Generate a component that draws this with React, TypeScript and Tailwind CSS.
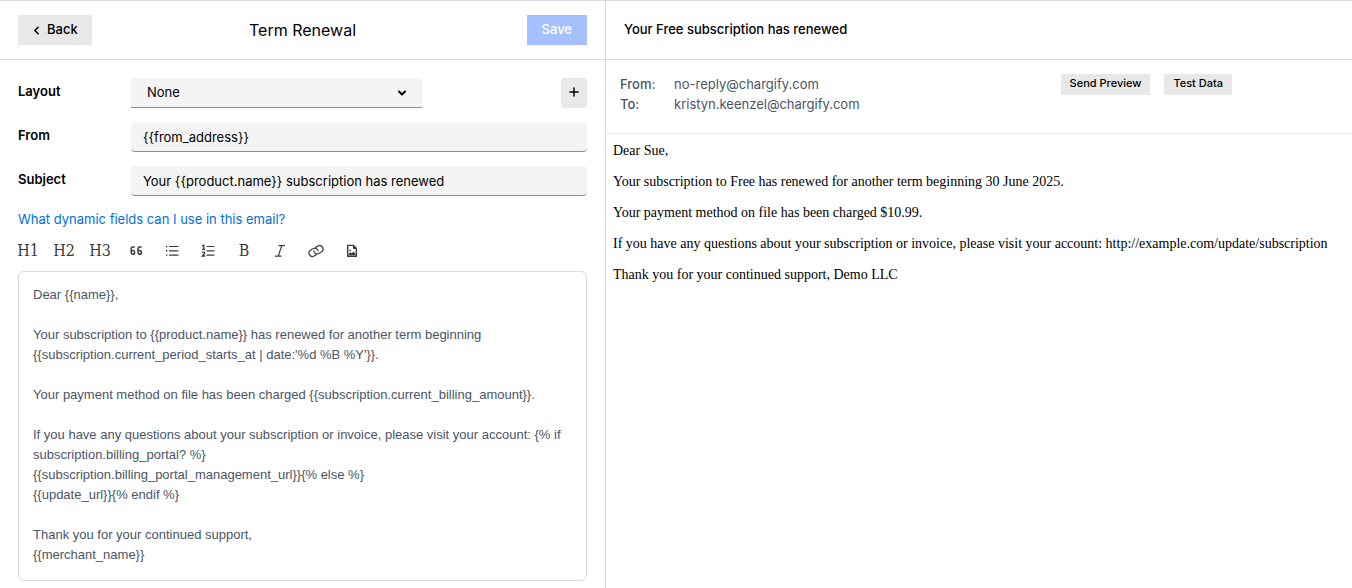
import React from 'react';
import { ChevronDown, ChevronLeft, Plus } from 'lucide-react';

const TEMPLATE = `Dear {{name}},

Your subscription to {{product.name}} has renewed for another term beginning {{subscription.current_period_starts_at | date:'%d %B %Y'}}.

Your payment method on file has been charged {{subscription.current_billing_amount}}.

If you have any questions about your subscription or invoice, please visit your account: {% if subscription.billing_portal? %}
{{subscription.billing_portal_management_url}}{% else %}
{{update_url}}{% endif %}

Thank you for your continued support,
{{merchant_name}}`;

const PREVIEW = [
    'Dear Sue,',
    'Your subscription to Free has renewed for another term beginning 30 June 2025.',
    'Your payment method on file has been charged $10.99.',
    'If you have any questions about your subscription or invoice, please visit your account: http://example.com/update/subscription',
    'Thank you for your continued support, Demo LLC',
];

interface IconProps {
    children: React.ReactNode;
}

const Icon: React.FC<IconProps> = ({ children }) => (
    <svg width="16" height="16" viewBox="0 0 16 16" fill="none" stroke="currentColor" strokeWidth="1.2" aria-hidden="true">
        {children}
    </svg>
);

const QuoteIcon = () => (
    <Icon>
        <path strokeWidth="1.5" d="M6.8 4H4.6Q3.2 4 3.2 5.4V9.8Q3.2 11.3 4.9 11.3Q6.6 11.3 6.6 9.4Q6.6 7.6 4.9 7.6H3.2M13.6 4H11.4Q10 4 10 5.4V9.8Q10 11.3 11.7 11.3Q13.4 11.3 13.4 9.4Q13.4 7.6 11.7 7.6H10" />
    </Icon>
);

const BulletListIcon = () => (
    <Icon>
        <path d="M5 3.5H14.5M5 7.8H14.5M5 12.1H14.5" />
        <path strokeWidth="1.4" d="M2 3.5H3.4M2 7.8H3.4M2 12.1H3.4" />
    </Icon>
);

const OrderedListIcon = () => (
    <Icon>
        <path d="M6.5 3.5H14.5M6.5 7.8H14.5M6.5 12.1H14.5" />
        <path strokeWidth="1.3" d="M2 3L3.8 2.2V6.4M2 6.4H5.2M2 9.4Q5 8.4 4.6 10.2Q4.4 11.2 2.4 13H5.2" />
    </Icon>
);

const ItalicIcon = () => (
    <Icon>
        <path d="M6.5 2.6H13M3 13.2H9.5M9.8 2.6L6.2 13.2" />
    </Icon>
);

const LinkIcon = () => (
    <Icon>
        <g transform="rotate(-30 8 8)" strokeWidth="1.2">
            <path d="M7 11.3H3.9A3.4 3.4 0 0 1 3.9 4.5H7A3.3 3.3 0 0 1 9.6 9.6" />
            <path d="M9 4.7H12.1A3.4 3.4 0 0 1 12.1 11.5H9A3.3 3.3 0 0 1 6.4 6.4" />
        </g>
    </Icon>
);

const ImageIcon = () => (
    <Icon>
        <path strokeWidth="1.4" d="M3.7 2.4H9.5L12.3 5.2V13.2H3.7Z" />
        <path fill="currentColor" stroke="none" d="M9 2V6H13ZM4.8 12.2V10.8L6.6 9.2L7.8 10.3L9.4 8.6L11.4 10.8V12.2ZM5.4 6.8H6.8V8.2H5.4Z" />
    </Icon>
);

const TOOLS = [
    { label: 'Heading 1', icon: 'H1' },
    { label: 'Heading 2', icon: 'H2' },
    { label: 'Heading 3', icon: 'H3' },
    { label: 'Quote', icon: <QuoteIcon /> },
    { label: 'Bulleted list', icon: <BulletListIcon /> },
    { label: 'Numbered list', icon: <OrderedListIcon /> },
    { label: 'Bold', icon: 'B' },
    { label: 'Italic', icon: <ItalicIcon /> },
    { label: 'Link', icon: <LinkIcon /> },
    { label: 'Image', icon: <ImageIcon /> },
];

interface TextFieldProps {
    id: string;
    label: string;
    value: string;
}

const TextField: React.FC<TextFieldProps> = ({ id, label, value }) => (
    <div className="flex items-start">
        <label htmlFor={id} className="w-[113px] pt-[3px] font-semibold leading-5">{label}</label>
        <input
            id={id}
            defaultValue={value}
            className="h-[30px] min-w-0 flex-1 rounded-sm border-b border-[#8d8d8d] bg-[#f4f4f4] px-3 outline-none"
        />
    </div>
);

const EmailEditor = () => (
    <section className="flex flex-col border-r border-[#d9d9de]">
        <header className="grid h-[59px] grid-cols-[1fr_auto_1fr] items-center border-b border-[#d9d9de] px-[18px]">
            <button type="button" className="flex h-[30px] items-center gap-1 justify-self-start bg-[#e8e8e8] pr-[14px] pl-3 font-medium">
                <ChevronLeft size={13} strokeWidth={3} />
                Back
            </button>
            <h1 className="text-base leading-5">Term Renewal</h1>
            <button type="button" disabled className="h-[30px] justify-self-end bg-[#a6bfff] px-[15px] font-medium text-white">Save</button>
        </header>

        <div className="flex flex-col px-[18px] pt-[18px] pb-[7px]">
            <div className="flex flex-col gap-[14px]">
                <div className="flex items-start">
                    <label htmlFor="layout" className="w-[113px] pt-[3px] font-semibold leading-5">Layout</label>
                    <div className="relative w-[291px]">
                        <select id="layout" className="h-[30px] w-full appearance-none border-b border-[#8d8d8d] bg-[#f4f4f4] px-4 outline-none">
                            <option>None</option>
                        </select>
                        <ChevronDown size={12} strokeWidth={4} className="pointer-events-none absolute top-[9px] right-[14px]" />
                    </div>
                    <button type="button" aria-label="Add layout" className="ml-auto flex h-[30px] w-[26px] items-center justify-center rounded bg-[#e8e8e8] pb-[2px]">
                        <Plus size={14} strokeWidth={2.5} />
                    </button>
                </div>
                <TextField id="from" label="From" value="{{from_address}}" />
                <TextField id="subject" label="Subject" value="Your {{product.name}} subscription has renewed" />
            </div>

            <a href="#dynamic-fields" className="mt-[13px] self-start leading-5 text-[#0070e0]">
                What dynamic fields can I use in this email?
            </a>

            <div className="mt-3 flex h-5 gap-4 text-[#3c3c3c]">
                {TOOLS.map(({ label, icon }) => (
                    <button
                        key={label}
                        type="button"
                        aria-label={label}
                        className="flex w-5 items-center justify-center font-['DejaVu_Serif_Condensed','DejaVu_Serif',serif] text-base leading-5"
                    >
                        {icon}
                    </button>
                ))}
            </div>

            <textarea
                aria-label="Email body"
                rows={14}
                defaultValue={TEMPLATE}
                className="mt-[10px] block w-full resize-none rounded-md border border-[#d9d9d9] px-[14px] pt-[13px] pb-[15px] font-['Liberation_Sans',Arial,sans-serif] leading-5 text-[#4a5568] outline-none"
            />
        </div>
    </section>
);

const EmailPreview = () => (
    <section className="min-w-0">
        <header className="flex h-[59px] items-center border-b border-[#d9d9de] px-[18px]">
            <h2 className="font-medium">Your Free subscription has renewed</h2>
        </header>

        <div className="flex items-start justify-between border-b border-[#e8e8e8] pt-[14px] pr-[120px] pb-[19px] pl-[14px]">
            <dl className="grid grid-cols-[54px_auto] leading-5 text-[#4a5568]">
                <dt className="font-medium">From:</dt>
                <dd>no-reply@chargify.com</dd>
                <dt className="font-medium">To:</dt>
                <dd>kristyn.keenzel@chargify.com</dd>
            </dl>
            <div className="flex gap-[14px] text-[11px] font-medium">
                <button type="button" className="h-[21px] bg-[#e8e8e8] px-[9px] pb-[2px]">Send Preview</button>
                <button type="button" className="h-[21px] bg-[#e8e8e8] px-[9px] pb-[2px]">Test Data</button>
            </div>
        </div>

        <article className="flex flex-col gap-[15px] py-[9px] pl-[7px] font-['Liberation_Serif','Times_New_Roman',serif] text-sm leading-4">
            {PREVIEW.map((line) => (
                <p key={line}>{line}</p>
            ))}
        </article>
    </section>
);

export default function App() {
    return (
        <main className="grid min-h-screen grid-cols-[303fr_373fr] border-t border-[#d9d9de] bg-white font-[Inter,sans-serif] text-[13px] text-black">
            <EmailEditor />
            <EmailPreview />
        </main>
    );
}
